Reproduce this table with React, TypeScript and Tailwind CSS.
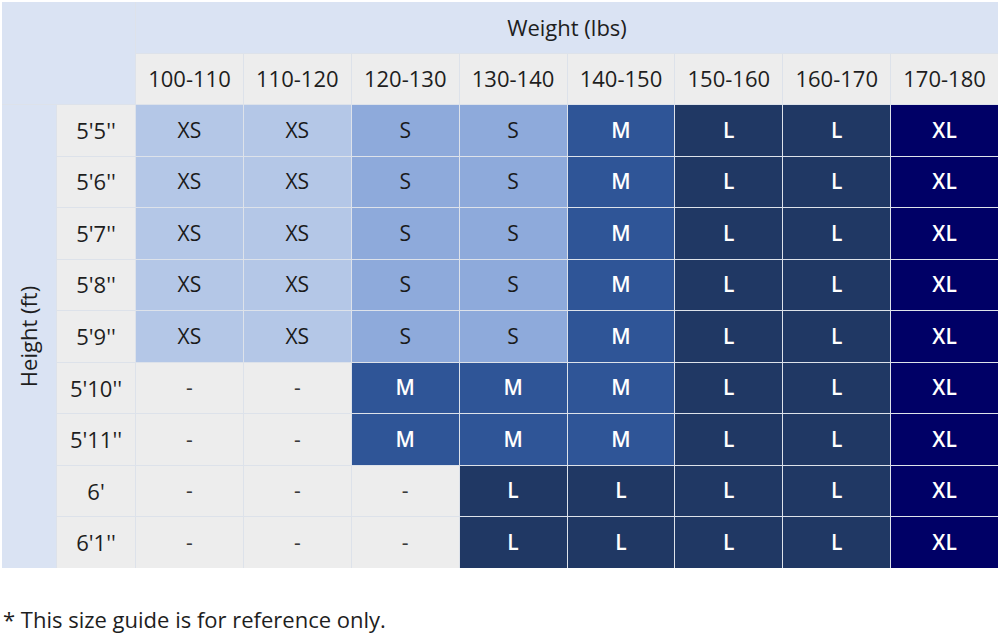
import React from 'react';

const weights = ['100-110', '110-120', '120-130', '130-140', '140-150', '150-160', '160-170', '170-180'];

const rows: { h: string; sizes: string[] }[] = [
  { h: "5'5''", sizes: ['XS', 'XS', 'S', 'S', 'M', 'L', 'L', 'XL'] },
  { h: "5'6''", sizes: ['XS', 'XS', 'S', 'S', 'M', 'L', 'L', 'XL'] },
  { h: "5'7''", sizes: ['XS', 'XS', 'S', 'S', 'M', 'L', 'L', 'XL'] },
  { h: "5'8''", sizes: ['XS', 'XS', 'S', 'S', 'M', 'L', 'L', 'XL'] },
  { h: "5'9''", sizes: ['XS', 'XS', 'S', 'S', 'M', 'L', 'L', 'XL'] },
  { h: "5'10''", sizes: ['-', '-', 'M', 'M', 'M', 'L', 'L', 'XL'] },
  { h: "5'11''", sizes: ['-', '-', 'M', 'M', 'M', 'L', 'L', 'XL'] },
  { h: "6'", sizes: ['-', '-', '-', 'L', 'L', 'L', 'L', 'XL'] },
  { h: "6'1''", sizes: ['-', '-', '-', 'L', 'L', 'L', 'L', 'XL'] },
];

const sizeStyle: Record<string, string> = {
  '-': 'bg-[#ededed] text-[#3a3a3a]',
  XS: 'bg-[#b4c7e7] text-[#1a1a1a]',
  S: 'bg-[#8eaadb] text-[#1a1a1a]',
  M: 'bg-[#2f5597] text-white font-semibold',
  L: 'bg-[#203864] text-white font-semibold',
  XL: 'bg-[#000066] text-white font-semibold',
};

export default function App() {
  return (
    <div className="w-[1000px] h-[634px] bg-white font-['Open_Sans',sans-serif] overflow-hidden">
      <div className="ml-[2px] mt-[2px] w-[996px] h-[566px] grid grid-cols-[54px_78px_repeat(8,1fr)] grid-rows-[repeat(11,1fr)] gap-px bg-[#dde2ea]">
        <div className="col-span-2 row-span-2 bg-[#dae3f3]" />
        <div className="col-span-8 bg-[#dae3f3] flex items-center justify-center text-[22px] text-[#1e1e1e]">
          Weight (lbs)
        </div>
        {weights.map((w) => (
          <div key={w} className="bg-[#ededed] flex items-center justify-center text-[22px] text-[#1e1e1e]">
            {w}
          </div>
        ))}
        <div className="row-span-9 bg-[#dae3f3] flex items-center justify-center">
          <span className="-rotate-90 whitespace-nowrap text-[22px] text-[#1e1e1e]">Height (ft)</span>
        </div>
        {rows.map((r) => (
          <React.Fragment key={r.h}>
            <div className="bg-[#ededed] flex items-center justify-center text-[22px] text-[#1e1e1e]">{r.h}</div>
            {r.sizes.map((s, i) => (
              <div key={i} className={`${sizeStyle[s]} flex items-center justify-center text-[21px]`}>
                {s}
              </div>
            ))}
          </React.Fragment>
        ))}
      </div>
      <p className="mt-[35px] ml-[3px] text-[22px] text-[#1e1e1e]">* This size guide is for reference only.</p>
    </div>
  );
}
